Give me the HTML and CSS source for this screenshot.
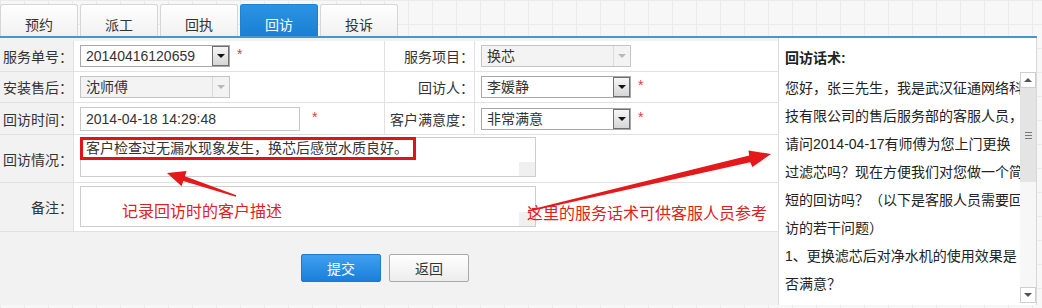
FILE: index.html
```html
<!DOCTYPE html>
<html lang="zh-CN">
<head>
  <meta charset="UTF-8" />
  <title>回访</title>
  <link rel="stylesheet" href="styles.css">
</head>
<body>
  <div class="page">
    <!-- 选项卡 -->
    <ul class="tabs">
      <li>预约</li>
      <li>派工</li>
      <li>回执</li>
      <li class="active">回访</li>
      <li>投诉</li>
    </ul>

    <div class="main">
      <!-- 表单 -->
      <div class="form">
        <div class="grid">
          <div class="lbl">服务单号：</div>
          <div class="val">
            <span class="sel"><span class="sel-text">20140416120659</span><span class="sel-btn"></span></span>
            <span class="req">*</span>
          </div>
          <div class="lbl lbl-r">服务项目：</div>
          <div class="val val-last">
            <span class="sel disabled"><span class="sel-text">换芯</span><span class="sel-btn"></span></span>
          </div>

          <div class="lbl">安装售后：</div>
          <div class="val">
            <span class="sel disabled"><span class="sel-text">沈师傅</span><span class="sel-btn"></span></span>
          </div>
          <div class="lbl lbl-r">回访人：</div>
          <div class="val val-last">
            <span class="sel"><span class="sel-text">李媛静</span><span class="sel-btn"></span></span>
            <span class="req">*</span>
          </div>

          <div class="lbl">回访时间：</div>
          <div class="val">
            <span class="txt">2014-04-18 14:29:48</span>
            <span class="req req-far">*</span>
          </div>
          <div class="lbl lbl-r">客户满意度：</div>
          <div class="val val-last">
            <span class="sel"><span class="sel-text">非常满意</span><span class="sel-btn"></span></span>
            <span class="req">*</span>
          </div>

          <div class="lbl">回访情况：</div>
          <div class="val val-wide val-top">
            <div class="area">
              <div class="area-text"><span class="hl">客户检查过无漏水现象发生，换芯后感觉水质良好。</span></div>
              <div class="area-corner"></div>
            </div>
          </div>

          <div class="lbl">备注：</div>
          <div class="val val-wide val-top val-note">
            <div class="area area-note">
              <div class="area-text"></div>
              <div class="area-corner"></div>
            </div>
          </div>
        </div>

        <div class="actions">
          <button class="btn btn-primary">提交</button>
          <button class="btn">返回</button>
        </div>
      </div>

      <!-- 回访话术 -->
      <div class="panel">
        <div class="panel-title">回访话术:</div>
        <div class="panel-body">
          您好，张三先生，我是武汉征通网络科<br>
          技有限公司的售后服务部的客服人员，<br>
          请问2014-04-17有师傅为您上门更换<br>
          过滤芯吗？现在方便我们对您做一个简<br>
          短的回访吗？（以下是客服人员需要回<br>
          访的若干问题）<br>
          1、更换滤芯后对净水机的使用效果是<br>
          否满意？
        </div>
        <div class="scrollbar">
          <div class="sb-btn"><span class="tri-up"></span></div>
          <div class="sb-thumb"><span class="grip"></span></div>
          <div class="sb-track"></div>
          <div class="sb-btn"><span class="tri-down"></span></div>
        </div>
      </div>
    </div>

    <!-- 标注 -->
    <svg class="marks" width="1042" height="308" viewBox="0 0 1042 308">
      <polygon fill="#e3191b" points="167,173 186.6,171.1 184.9,176.3 236.3,195.2 235.8,196.8 183.3,181.1 181.6,186.3" />
      <polygon fill="#e3191b" points="771,154 748.5,150.5 749.2,155.6 527.8,210.2 528.2,211.8 750.2,162.3 752.4,167" />
    </svg>
    <div class="note note-1">记录回访时的客户描述</div>
    <div class="note note-2">这里的服务话术可供客服人员参考</div>
  </div>
</body>
</html>
```

FILE: styles.css
```css
body {
  margin: 0;
  font-family: "Liberation Sans", "Noto Sans CJK SC", sans-serif;
  font-size: 14px;
  color: #333;
  background-color: #f7f7f7;
  background-image:
    linear-gradient(#ebebeb 1px, transparent 1px),
    linear-gradient(90deg, #ebebeb 1px, transparent 1px);
  background-size: 24px 24px;
}

.page {
  position: relative;
  width: 1042px;
  height: 308px;
}

/* 选项卡 */
.tabs {
  display: flex;
  gap: 2px;
  width: 1037px;
  margin: 0;
  padding: 4px 0 0;
  list-style: none;
  border-bottom: 2px solid #4199cd;
}

.tabs li {
  box-sizing: border-box;
  width: 78px;
  height: 32px;
  padding-top: 9px;
  line-height: 22px;
  text-align: center;
  border: 1px solid #d6d6d6;
  border-bottom: 0;
  border-radius: 3px 3px 0 0;
  background: linear-gradient(#ffffff, #f1f1f1);
}

.tabs li.active {
  color: #fff;
  border-color: #1d82d5;
  background: linear-gradient(#2b94e4, #1b7fd2);
}

.main {
  display: flex;
  box-sizing: border-box;
  width: 1037px;
  height: 267px;
  background: #fff;
  border-right: 1px solid #d8d8d8;
}

/* 表单 */
.form {
  width: 778px;
  flex-shrink: 0;
  padding-top: 3px;
  background: #f2f2f2;
}

.grid {
  display: grid;
  grid-template-columns: 74px 311px 90px 303px;
  grid-template-rows: 31px 31px 32px 48px 49px;
  background: #fff;
}

.lbl,
.val {
  box-sizing: border-box;
  border-bottom: 1px solid #e1e1e1;
  border-right: 1px solid #e1e1e1;
  display: flex;
  align-items: center;
  white-space: nowrap;
}

.lbl {
  justify-content: flex-end;
  background: #f2f2f2;
}

.lbl-r {
  background: #fff;
}

.val {
  padding-left: 6px;
}

.val-last {
  border-right: 0;
}

.val-wide {
  grid-column: 2 / 5;
  border-right: 0;
}

.val-top {
  align-items: flex-start;
  padding-top: 2px;
}

.val-note {
  padding-top: 3px;
}

.sel {
  display: flex;
  align-items: center;
  box-sizing: border-box;
  width: 150px;
  height: 22px;
  border: 1px solid #a8a8a8;
  background: #fff;
}

.sel-text {
  flex: 1;
  padding-left: 5px;
  line-height: 20px;
}

.sel-btn {
  display: flex;
  align-items: center;
  justify-content: center;
  box-sizing: border-box;
  width: 17px;
  height: 20px;
  border: 1px solid #6f6f6f;
  background: linear-gradient(#f6f6f6, #d6d6d6);
}

.sel-btn::after {
  content: "";
  border-left: 4px solid transparent;
  border-right: 4px solid transparent;
  border-top: 4px solid #111;
}

.sel.disabled {
  background: #f3f3f3;
  border-color: #c4c4c4;
}

.sel.disabled .sel-btn {
  border: 0;
  border-left: 1px solid #dcdcdc;
  background: #f3f3f3;
}

.sel.disabled .sel-btn::after {
  border-top-color: #b8b8b8;
}

.req {
  color: #e4393c;
  margin-left: 7px;
  margin-top: -4px;
}

.req-far {
  margin-left: 12px;
}

.txt {
  box-sizing: border-box;
  width: 220px;
  height: 24px;
  padding-left: 5px;
  line-height: 22px;
  border: 1px solid #c8c8c8;
}

.area {
  display: flex;
  box-sizing: border-box;
  width: 456px;
  height: 40px;
  border: 1px solid #cdcdcd;
}

.area-note {
  height: 41px;
}

.area-text {
  flex: 1;
}

.area-corner {
  align-self: flex-end;
  width: 16px;
  height: 14px;
  background: #f0f0f0;
}

.hl {
  display: inline-block;
  margin: -1px 0 0 -1px;
  padding: 0 5px 0 3px;
  line-height: 17px;
  border: 3px solid #e01414;
}

.actions {
  display: flex;
  gap: 8px;
  padding: 22px 0 0 301px;
}

.btn {
  box-sizing: border-box;
  width: 80px;
  height: 28px;
  padding: 0;
  font-family: inherit;
  font-size: 14px;
  color: #333;
  border: 1px solid #a9a9a9;
  border-radius: 2px;
  background: linear-gradient(#ffffff, #ececec);
}

.btn-primary {
  color: #fff;
  border-color: #1c79cb;
  background: linear-gradient(#3fa0f0, #1a7fd8);
}

/* 回访话术 */
.panel {
  position: relative;
  flex: 1;
  overflow: hidden;
  padding: 6px 0 0 6px;
  border-left: 1px solid #dcdcdc;
  color: #222;
}

.panel-title {
  line-height: 28px;
  font-weight: bold;
}

.panel-body {
  margin-top: 2px;
  line-height: 28px;
  white-space: nowrap;
}

.scrollbar {
  position: absolute;
  right: 0;
  top: 34px;
  bottom: 2px;
  width: 16px;
  display: flex;
  flex-direction: column;
  background: #f7f7f7;
}

.sb-btn {
  display: flex;
  align-items: center;
  justify-content: center;
  box-sizing: border-box;
  height: 16px;
  border: 1px solid #cfcfcf;
  background: #fff;
}

.tri-up {
  border-left: 4px solid transparent;
  border-right: 4px solid transparent;
  border-bottom: 4px solid #555;
}

.tri-down {
  border-left: 4px solid transparent;
  border-right: 4px solid transparent;
  border-top: 4px solid #555;
}

.sb-thumb {
  display: flex;
  align-items: center;
  justify-content: center;
  height: 94px;
  background: #e4e4e4;
}

.grip {
  width: 7px;
  height: 5px;
  border-top: 1px solid #777;
  border-bottom: 1px solid #777;
  background: linear-gradient(transparent 2px, #777 2px, #777 3px, transparent 3px);
}

.sb-track {
  flex: 1;
}

/* 标注 */
.marks {
  position: absolute;
  left: 0;
  top: 0;
  pointer-events: none;
}

.note {
  position: absolute;
  font-size: 16px;
  line-height: 18px;
  color: #e0201c;
  white-space: nowrap;
}

.note-1 {
  left: 122px;
  top: 203px;
}

.note-2 {
  left: 527px;
  top: 205px;
}
```
